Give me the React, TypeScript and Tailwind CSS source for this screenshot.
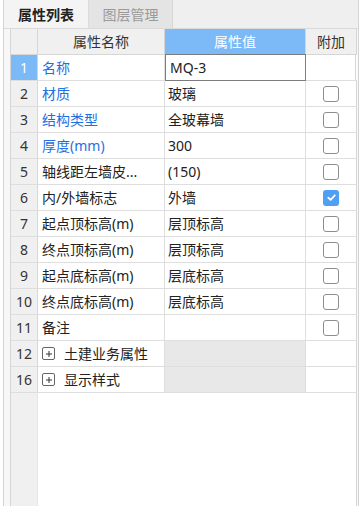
import React from 'react'

interface Row {
  no: number
  name: string
  value?: string
  blue?: boolean
  check?: 'on' | 'off' | 'none'
  group?: boolean
}

const rows: Row[] = [
  { no: 1, name: '名称', value: 'MQ-3', blue: true, check: 'none' },
  { no: 2, name: '材质', value: '玻璃', blue: true, check: 'off' },
  { no: 3, name: '结构类型', value: '全玻幕墙', blue: true, check: 'off' },
  { no: 4, name: '厚度(mm)', value: '300', blue: true, check: 'off' },
  { no: 5, name: '轴线距左墙皮...', value: '(150)', check: 'off' },
  { no: 6, name: '内/外墙标志', value: '外墙', check: 'on' },
  { no: 7, name: '起点顶标高(m)', value: '层顶标高', check: 'off' },
  { no: 8, name: '终点顶标高(m)', value: '层顶标高', check: 'off' },
  { no: 9, name: '起点底标高(m)', value: '层底标高', check: 'off' },
  { no: 10, name: '终点底标高(m)', value: '层底标高', check: 'off' },
  { no: 11, name: '备注', value: '', check: 'off' },
  { no: 12, name: '土建业务属性', group: true, check: 'none' },
  { no: 16, name: '显示样式', group: true, check: 'none' },
]

function CheckBox({ on }: { on: boolean }) {
  if (on) {
    return (
      <div className="w-[16px] h-[16px] rounded-[3px] bg-[#4f9ff5] flex items-center justify-center">
        <svg width="11" height="11" viewBox="0 0 10 10" fill="none">
          <path d="M2 5.2L4.2 7.2L8 3" stroke="white" strokeWidth={1.6} strokeLinecap="round" strokeLinejoin="round" />
        </svg>
      </div>
    )
  }
  return <div className="w-[16px] h-[16px] rounded-[3px] border border-[#8e8e8e] bg-white" />
}

export default function App() {
  return (
    <div
      className="w-[359px] h-[506px] bg-white pl-[3px] overflow-hidden text-[14px] text-[#222]"
      style={{ fontFamily: '"Noto Sans", "Noto Sans CJK SC", sans-serif' }}
    >
      <div className="h-full border-l border-r border-[#d4d4d4] flex flex-col bg-[#f7f7f7]">
        {/* tabs */}
        <div className="h-[29px] flex shrink-0 bg-[#efefef] border-b border-[#dadada]">
          <div className="w-[85px] flex items-center justify-center bg-[#f4f4f4] border-r border-[#dcdcdc] font-semibold text-[#222]">
            属性列表
          </div>
          <div className="w-[84px] flex items-center justify-center bg-[#e4e4e4] border-r border-[#d6d6d6] text-[#9a9a9a]">
            图层管理
          </div>
        </div>

        {/* table */}
        <div className="ml-[6px] w-[347px] flex-1 flex flex-col border-l border-[#d6d6d6] bg-white">
          {/* header */}
          <div className="flex h-[26px] shrink-0 border-b border-[#d6d6d6] bg-[#f0f0f0]">
            <div className="w-[27px] border-r border-[#d6d6d6]" />
            <div className="w-[127px] border-r border-[#d6d6d6] flex items-center justify-center text-[#333]">属性名称</div>
            <div className="w-[141px] border-r border-[#d6d6d6] flex items-center justify-center bg-[#7cb9f7] text-white">属性值</div>
            <div className="w-[51px] border-r border-[#d6d6d6] flex items-center justify-center text-[#333]">附加</div>
          </div>

          {rows.map((r) => {
            const first = r.no === 1
            return (
              <div key={r.no} className="flex h-[26px] shrink-0 border-b border-[#dedede]">
                <div
                  className={`w-[27px] border-r border-[#d6d6d6] flex items-center justify-center ${
                    first ? 'bg-[#7cb9f7] text-white' : 'bg-[#f0f0f0] text-[#333]'
                  }`}
                >
                  {r.no}
                </div>
                <div
                  className={`w-[127px] border-r border-[#dedede] flex items-center pl-[4px] whitespace-nowrap overflow-hidden ${
                    r.blue ? 'text-[#1f6fe0]' : 'text-[#222]'
                  }`}
                >
                  {r.group ? (
                    <>
                      <span className="w-[13px] h-[13px] border border-[#666] rounded-[2px] flex items-center justify-center mr-[9px]">
                        <svg width="8" height="8" viewBox="0 0 8 8">
                          <path d="M4 1V7M1 4H7" stroke="#333" strokeWidth={1} />
                        </svg>
                      </span>
                      {r.name}
                    </>
                  ) : (
                    r.name
                  )}
                </div>
                {first ? (
                  <div className="w-[141px] border border-[#7d7d7d] -mt-px h-[27px] -mr-px flex items-center pl-[4px] bg-white">
                    {r.value}
                  </div>
                ) : (
                  <div
                    className={`w-[141px] border-r border-[#dedede] flex items-center pl-[3px] ${
                      r.group ? 'bg-[#e8e8e8]' : ''
                    }`}
                  >
                    {r.value}
                  </div>
                )}
                <div className="w-[51px] border-r border-[#d6d6d6] flex items-center justify-center">
                  {r.check !== 'none' && <CheckBox on={r.check === 'on'} />}
                </div>
              </div>
            )
          })}

          {/* empty area */}
          <div className="flex-1 flex">
            <div className="w-[27px] bg-[#f0f0f0] border-r border-[#e6e6e6]" />
            <div className="flex-1 border-r border-[#d6d6d6]" />
          </div>
        </div>
      </div>
    </div>
  )
}
